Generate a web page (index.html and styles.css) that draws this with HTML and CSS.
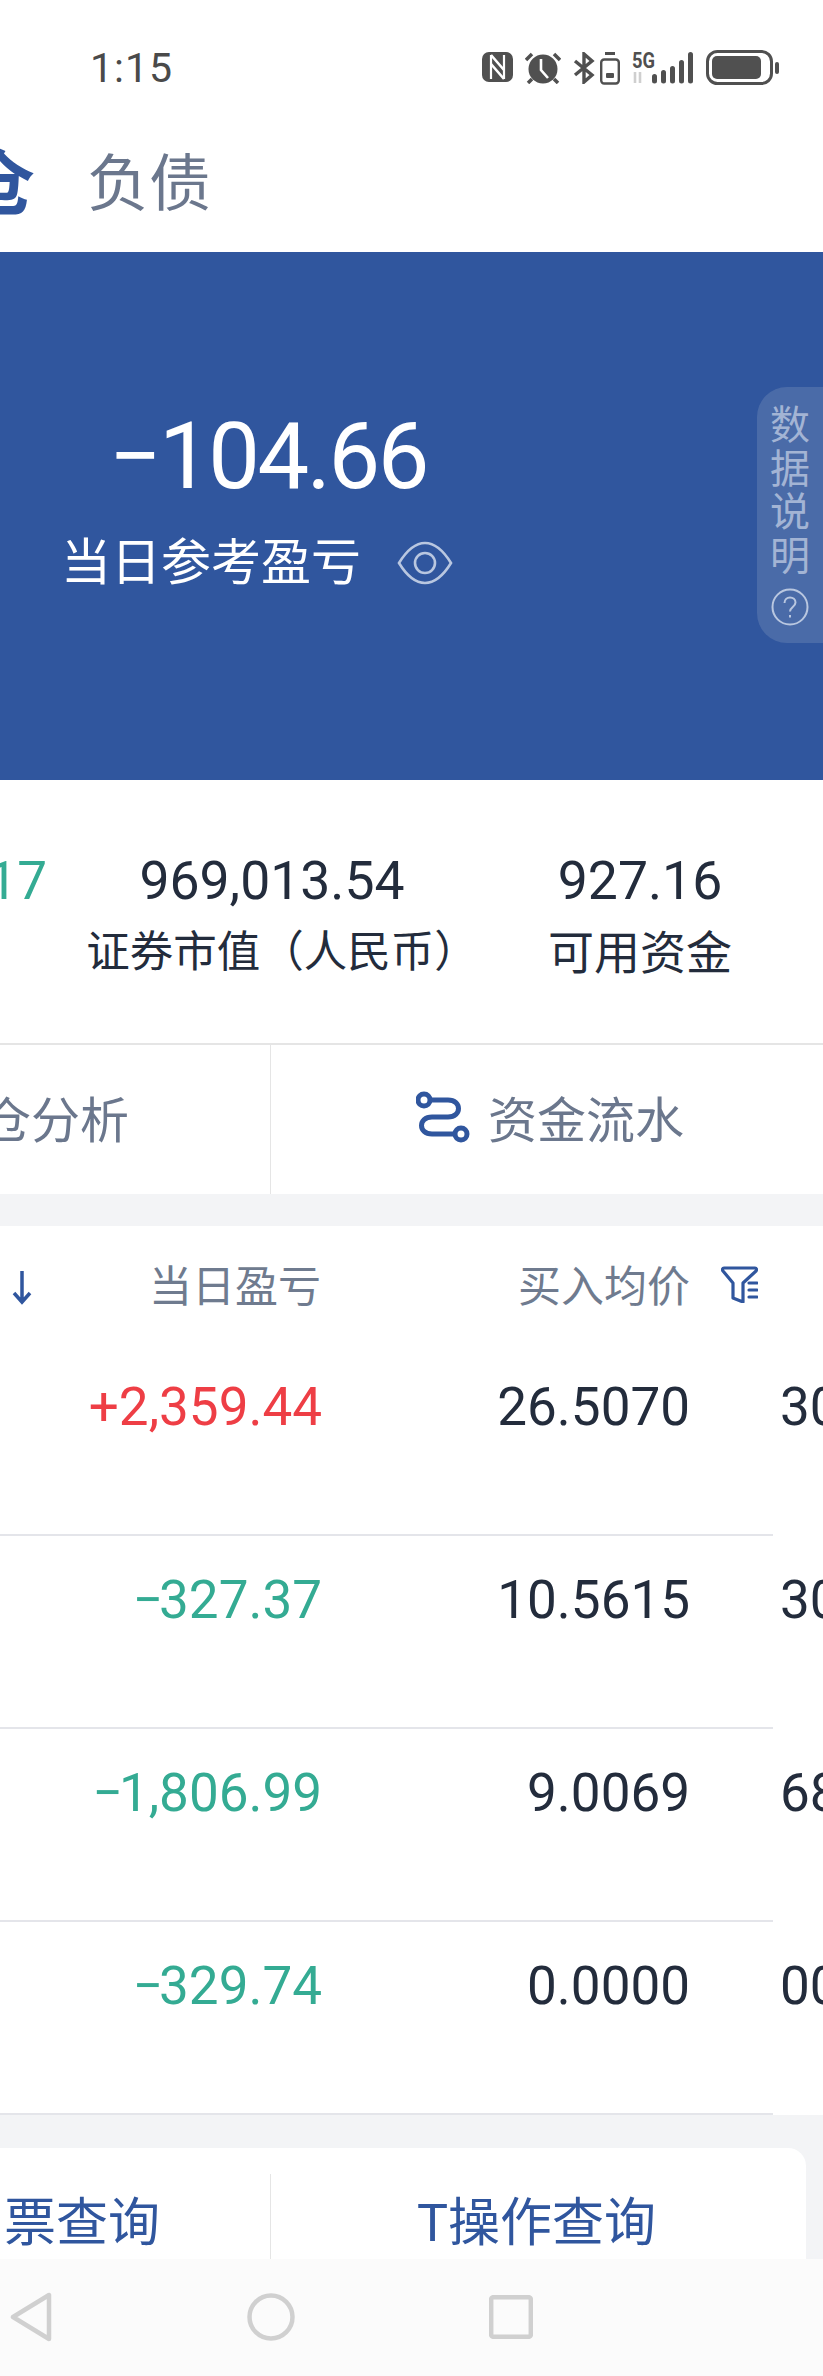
FILE: index.html
```html
<!DOCTYPE html>
<html lang="zh-CN">
<head>
  <meta charset="UTF-8" />
  <meta name="viewport" content="width=device-width, initial-scale=1.0" />
  <title>持仓</title>
  <link rel="stylesheet" href="styles.css">
</head>
<body>
  <div class="phone">
    <!-- Status bar -->
    <div class="status">
      <span class="time">1:15</span>
      <div class="status-icons">
        <svg width="31" height="30" viewBox="0 0 31 30"><rect width="31" height="30" rx="7" fill="#505050"/><path d="M9 3v24M22 3v24" stroke="#fff" stroke-width="2.200"/><path d="M9 3l13 15M9 12l13 15" stroke="#fff" stroke-width="2.600" fill="none"/></svg>
        <svg width="36" height="32" viewBox="0 0 36 32"><path d="M1 8l6-6M35 8l-6-6M7 27l-4 4M29 27l4 4" stroke="#505050" stroke-width="3.500" fill="none"/><circle cx="18" cy="17" r="14.500" fill="#505050"/><path d="M16 7v11l7 8" stroke="#fff" stroke-width="2.600" fill="none"/></svg>
        <svg class="bt" width="22" height="32" viewBox="0 0 22 32"><path d="M2 9l17 14-8 7V2l8 7L2 23" fill="none" stroke="#505050" stroke-width="3.400"/></svg>
        <svg class="vibrate" width="20" height="33" viewBox="0 0 20 33"><path d="M5 1.500h10" stroke="#505050" stroke-width="3"/><rect x="1.200" y="7.500" width="17.600" height="24" rx="3" fill="none" stroke="#505050" stroke-width="2.400"/><rect x="6" y="21" width="8" height="5" rx="1" fill="#505050"/></svg>
        <svg class="signal" width="62" height="32" viewBox="0 0 62 32">
          <text x="0" y="16" class="five-g" textLength="23" lengthAdjust="spacingAndGlyphs">5G</text>
          <path d="M3 20v11M8 31V20" stroke="#cfcfcf" stroke-width="2.600"/>
          <rect x="20" y="22" width="5" height="9.500" rx="2.500" fill="#505050"/>
          <rect x="29" y="18" width="5" height="13.500" rx="2.500" fill="#505050"/>
          <rect x="38" y="14" width="5" height="17.500" rx="2.500" fill="#505050"/>
          <rect x="47" y="8" width="5" height="23.500" rx="2.500" fill="#505050"/>
          <rect x="56" y="0" width="5" height="31.500" rx="2.500" fill="#505050"/>
        </svg>
        <svg class="battery" width="73" height="35" viewBox="0 0 73 35"><rect x="1.500" y="1.500" width="64" height="32" rx="10" fill="none" stroke="#505050" stroke-width="3"/><rect x="6" y="6" width="49" height="23" rx="5" fill="#505050"/><rect x="69" y="12" width="4" height="12" rx="2" fill="#505050"/></svg>
      </div>
    </div>

    <!-- Tabs -->
    <div class="tabs">
      <span class="tab active">仓</span>
      <span class="tab">负债</span>
    </div>

    <!-- Summary -->
    <div class="hero">
      <div class="hero-value">−104.66</div>
      <div class="hero-label">
        <span>当日参考盈亏</span>
        <svg width="56" height="44" viewBox="0 0 56 44" fill="none" stroke="#b9c7e0" stroke-width="2.600"><path d="M2 22C10 9 18 2 28 2s18 7 26 20c-8 13-16 20-26 20S10 35 2 22z"/><circle cx="28" cy="22" r="10"/></svg>
      </div>
      <div class="data-tip">
        <span>数</span><span>据</span><span>说</span><span>明</span>
        <svg width="38" height="38" viewBox="0 0 38 38" fill="none" stroke="#b9c7e0" stroke-width="2"><circle cx="19" cy="19" r="17.500"/><path d="M13.500 15c0-3.500 2.500-5.500 5.500-5.500s5.500 2 5.500 5c0 4.500-5.500 4.500-5.500 9"/><path d="M19 27v2.500"/></svg>
      </div>
    </div>

    <!-- Totals -->
    <div class="totals">
      <div class="total-cut green">17</div>
      <div class="total">
        <div class="num">969,013.54</div>
        <div class="cap cap-small">证券市值（人民币）</div>
      </div>
      <div class="total">
        <div class="num">927.16</div>
        <div class="cap">可用资金</div>
      </div>
    </div>

    <!-- Links -->
    <div class="links">
      <div class="link link-left"><span>仓分析</span></div>
      <div class="link link-right">
        <svg width="54" height="52" viewBox="0 0 54 52" fill="none" stroke="#30569e" stroke-width="5"><circle cx="8" cy="9" r="6"/><circle cx="45" cy="43" r="6"/><path d="M14 9h18c14 0 14 17 0 17H16c-14 0-14 17 0 17h23"/></svg>
        <span>资金流水</span>
      </div>
    </div>

    <!-- Positions table -->
    <div class="table">
      <div class="row head">
        <div class="cell first">
          <svg width="20" height="36" viewBox="0 0 20 36" fill="none" stroke="#30569e" stroke-width="3.500"><path d="M10 2v31M2 24l8 9 8-9"/></svg>
          <span>当日盈亏</span>
        </div>
        <div class="cell">买入均价</div>
        <div class="cell filter">
          <svg width="37" height="37" viewBox="0 0 37 37" fill="none" stroke="#30569e" stroke-width="3.200" stroke-linejoin="round" stroke-linecap="round"><path d="M3 2h31c1.500 0 2 1.500 1 3L22 17v19l-10-4V17L2 5C1 3.500 1.500 2 3 2z"/><path d="M28 17h8M28 24h8M28 31h8"/></svg>
        </div>
      </div>
      <div class="row line">
        <div class="cell first red">+2,359.44</div>
        <div class="cell">26.5070</div>
        <div class="cell extra">30</div>
      </div>
      <div class="row line">
        <div class="cell first green"><span class="minus">−</span>327.37</div>
        <div class="cell">10.5615</div>
        <div class="cell extra">30</div>
      </div>
      <div class="row line">
        <div class="cell first green"><span class="minus">−</span>1,806.99</div>
        <div class="cell">9.0069</div>
        <div class="cell extra">68</div>
      </div>
      <div class="row line">
        <div class="cell first green"><span class="minus">−</span>329.74</div>
        <div class="cell">0.0000</div>
        <div class="cell extra">00</div>
      </div>
    </div>

    <!-- Query card -->
    <div class="query-wrap">
      <div class="query">
        <div class="q q-left">票查询</div>
        <div class="q q-right">T操作查询</div>
      </div>
    </div>

    <!-- Navigation bar -->
    <div class="navbar">
      <svg class="nav-back" width="42" height="50" viewBox="0 0 42 50" fill="none" stroke="#d0d0d0" stroke-width="4.500" stroke-linejoin="round"><path d="M39 3v44L3 25z"/></svg>
      <svg class="nav-home" width="48" height="48" viewBox="0 0 48 48" fill="none" stroke="#d0d0d0" stroke-width="4.500"><circle cx="24" cy="24" r="21.500"/></svg>
      <svg class="nav-recent" width="44" height="44" viewBox="0 0 44 44" fill="none" stroke="#d0d0d0" stroke-width="4.500"><rect x="2.200" y="2.200" width="39.600" height="39.600" rx="2"/></svg>
    </div>
  </div>
</body>
</html>
```
FILE: styles.css
```css
* { box-sizing: border-box; }
body { margin: 0; background: #fff; font-family: Roboto, "Noto Sans CJK SC", sans-serif; }
.phone { width: 823px; height: 2376px; overflow: hidden; display: flex; flex-direction: column; }

.status { height: 105px; flex: none; display: flex; padding: 44px 0 0 90px; justify-content: space-between; }
.time { font-size: 41px; line-height: 48px; color: #4a4a4a; letter-spacing: 1px; }
.status-icons { display: flex; align-items: flex-start; padding: 8px 44px 0 0; gap: 12px; }
.status-icons .bt { margin-right: -7px; }
.status-icons .battery { margin-top: -2px; }
.five-g { font: 700 22px Roboto, sans-serif; fill: #505050; }

.tabs { height: 147px; flex: none; display: flex; align-items: center; padding-top: 12px; }
.tab { font-size: 62px; line-height: 72px; color: #6b778d; }
.tab.active { color: #30569e; font-size: 72px; font-weight: 700; margin-left: -37px; margin-right: 52px; }

.hero { height: 528px; flex: none; background: #30569e; color: #fff; position: relative; padding: 151px 0 0 61px; }
.hero-value { font-size: 92px; line-height: 108px; margin-left: 48px; letter-spacing: -2.500px; }
.hero-label { display: flex; align-items: center; gap: 36px; font-size: 50px; line-height: 60px; margin-top: 22px; }
.data-tip { position: absolute; right: 0; top: 135px; width: 66px; height: 256px; background: #4a6ba8; border-radius: 30px 0 0 30px; padding-top: 17px; display: flex; flex-direction: column; align-items: center; color: #a3b4d4; font-size: 40px; line-height: 43.500px; }
.data-tip svg { margin-top: 10px; }

.totals { height: 265px; flex: none; display: grid; grid-template-columns: 47px 450px 286px; padding-top: 70px; border-bottom: 2px solid #e5e5e5; }
.total-cut { display: flex; justify-content: flex-end; font-size: 53px; line-height: 62px; }
.total { text-align: center; color: #232c3c; white-space: nowrap; }
.num { font-size: 53.500px; line-height: 62px; }
.cap { font-size: 46px; line-height: 56px; margin-top: 13px; }
.cap-small { font-size: 43.500px; padding-left: 20px; }

.links { height: 149px; flex: none; display: grid; grid-template-columns: 270px 1fr; color: #6b778d; font-size: 49px; }
.link { display: flex; align-items: center; height: 149px; padding-bottom: 6px; }
.link-left { justify-content: flex-end; padding-right: 141px; border-right: 1px solid #e5e5e5; white-space: nowrap; width: 271px; }
.link-right { padding-left: 146px; gap: 18px; }

.table { flex: none; background: #fff; border-top: 32px solid #f3f4f6; font-size: 53px; color: #232c3c; }
.row { display: grid; grid-template-columns: 322px 368px 1fr; align-items: start; }
.cell { text-align: right; white-space: nowrap; }
.head { height: 117px; padding-top: 31px; font-size: 43px; line-height: 60px; color: #6f7b8f; }
.cell.first { display: flex; justify-content: flex-end; }
.head .first { justify-content: space-between; padding-left: 12px; padding-right: 1px; align-items: center; }
.filter { padding-left: 31px; padding-top: 9px; text-align: left; }
.filter svg { display: block; }
.line { height: 193px; padding-top: 34px; line-height: 60px; position: relative; }
.line::after { content: ""; position: absolute; left: 0; bottom: 0; width: 773px; border-bottom: 2px solid #e4e5ea; }
.extra { text-align: left; padding-left: 90px; }
.minus { margin-right: -4px; }
.red { color: #ee3e45; }
.green { color: #34ab93; }

.query-wrap { flex: 1; background: #f3f4f6; padding-top: 33px; padding-right: 17px; }
.query { background: #fff; border-radius: 0 18px 0 0; height: 111px; display: grid; grid-template-columns: 271px 1fr; color: #30569e; font-size: 52px; white-space: nowrap; padding-top: 26px; }
.q { height: 85px; line-height: 60px; padding-top: 20px; }
.q-left { border-right: 1px solid #e5e5e5; display: flex; justify-content: flex-end; padding-right: 110px; }
.q-right { padding-left: 146px; }

.navbar { height: 117px; flex: none; background: #fbfbfb; display: grid; grid-template-columns: 247px 242px 1fr; align-items: center; padding-bottom: 2px; }
.nav-back { margin-left: 10px; }
```
